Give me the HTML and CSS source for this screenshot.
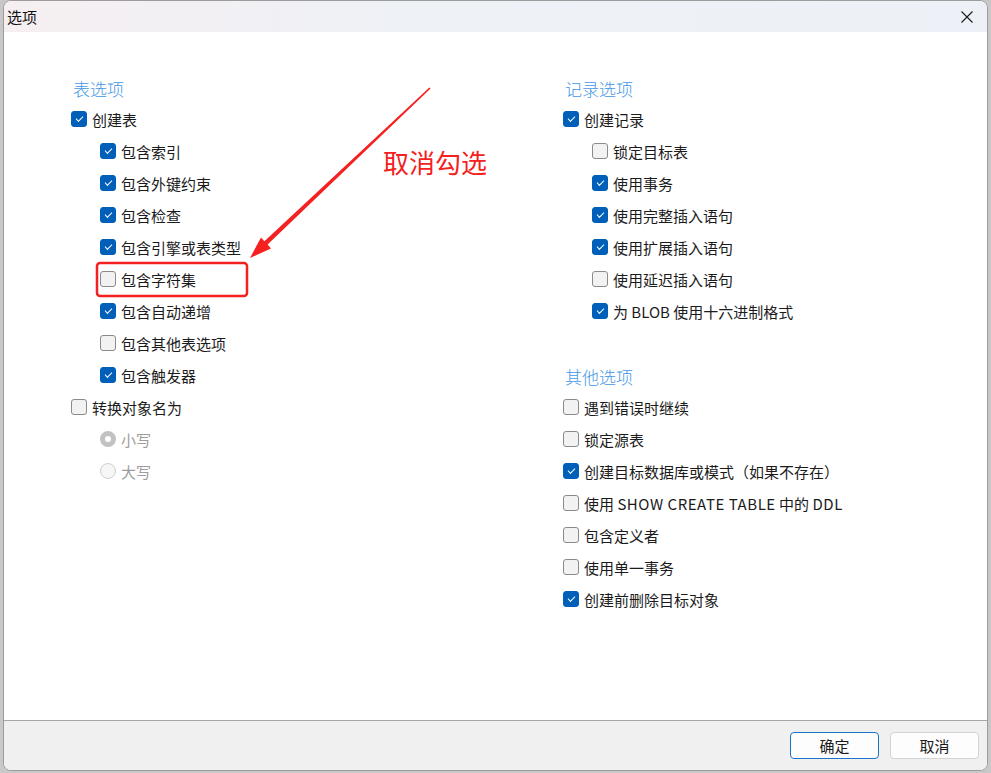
FILE: index.html
```html
<!DOCTYPE html>
<html lang="zh-CN">
<head>
    <meta charset="UTF-8">
    <title>选项</title>
    <link rel="stylesheet" href="styles.css">
</head>
<body>

<div class="window">
    <div class="titlebar">
        <span class="title">选项</span>
        <span class="close">
            <svg width="12" height="12" viewBox="0 0 12 12"><path d="M0.5 0.5 L11.5 11.5 M11.5 0.5 L0.5 11.5" stroke="#1a1a1a" stroke-width="1.1" fill="none"/></svg>
        </span>
    </div>

    <div class="content">
        <div class="column">
            <div class="heading">表选项</div>
            <div class="opt"><span class="box on"></span>创建表</div>
            <div class="opt sub"><span class="box on"></span>包含索引</div>
            <div class="opt sub"><span class="box on"></span>包含外键约束</div>
            <div class="opt sub"><span class="box on"></span>包含检查</div>
            <div class="opt sub"><span class="box on"></span>包含引擎或表类型</div>
            <div class="opt sub"><span class="box"></span>包含字符集</div>
            <div class="opt sub"><span class="box on"></span>包含自动递增</div>
            <div class="opt sub"><span class="box"></span>包含其他表选项</div>
            <div class="opt sub"><span class="box on"></span>包含触发器</div>
            <div class="opt"><span class="box"></span>转换对象名为</div>
            <div class="opt sub disabled"><span class="radio on"></span>小写</div>
            <div class="opt sub disabled"><span class="radio"></span>大写</div>
        </div>

        <div class="column">
            <div class="heading">记录选项</div>
            <div class="opt"><span class="box on"></span>创建记录</div>
            <div class="opt sub"><span class="box"></span>锁定目标表</div>
            <div class="opt sub"><span class="box on"></span>使用事务</div>
            <div class="opt sub"><span class="box on"></span>使用完整插入语句</div>
            <div class="opt sub"><span class="box on"></span>使用扩展插入语句</div>
            <div class="opt sub"><span class="box"></span>使用延迟插入语句</div>
            <div class="opt sub"><span class="box on"></span>为 BLOB 使用十六进制格式</div>

            <div class="heading second">其他选项</div>
            <div class="opt"><span class="box"></span>遇到错误时继续</div>
            <div class="opt"><span class="box"></span>锁定源表</div>
            <div class="opt"><span class="box on"></span>创建目标数据库或模式（如果不存在）</div>
            <div class="opt"><span class="box"></span><span>使用 <span class="latin">SHOW CREATE TABLE</span> 中的 <span class="latin">DDL</span></span></div>
            <div class="opt"><span class="box"></span>包含定义者</div>
            <div class="opt"><span class="box"></span>使用单一事务</div>
            <div class="opt"><span class="box on"></span>创建前删除目标对象</div>
        </div>
    </div>

    <div class="footer">
        <button class="btn primary">确定</button>
        <button class="btn">取消</button>
    </div>
</div>

<!-- red annotation drawn over the dialog -->
<svg class="marks" width="991" height="773" viewBox="0 0 991 773">
    <rect x="97" y="263" width="150" height="33" rx="3" fill="none" stroke="#f52020" stroke-width="2.5"/>
    <polygon fill="#f52020" points="250,258 271,248.5 267.6,244.6 430.6,88.6 429.4,87.4 264.4,241.2 261,237.6"/>
</svg>
<div class="note">取消勾选</div>

</body>
</html>
```

FILE: styles.css
```css
* {
    margin: 0;
    padding: 0;
    box-sizing: border-box;
}

body {
    width: 991px;
    height: 773px;
    overflow: hidden;
    background: #c8c8c8;
    font-family: "Noto Sans CJK SC", "Noto Sans", sans-serif;
    font-size: 15px;
    color: #1b1b1b;
    position: relative;
}

.window {
    margin-left: 3px;
    width: 985px;
    height: 771px;
    border: 1px solid #9c9c9c;
    border-radius: 8px;
    background: #ffffff;
    overflow: hidden;
    display: flex;
    flex-direction: column;
}

.titlebar {
    height: 31px;
    flex: none;
    display: flex;
    align-items: center;
    justify-content: space-between;
    padding-left: 3px;
    background: linear-gradient(90deg, #f6eff1, #eef1f6 40%, #edf1f7);
}

.title {
    font-size: 15px;
    color: #111;
}

.close {
    width: 40px;
    height: 31px;
    display: flex;
    align-items: center;
    justify-content: center;
}

/* option columns */
.content {
    height: 688px;
    flex: none;
    display: grid;
    grid-template-columns: 492px 1fr;
    padding: 42px 0 0 67px;
}

.heading {
    height: 29px;
    display: flex;
    align-items: center;
    padding-left: 2px;
    font-size: 17px;
    font-weight: 300;
    color: #4497e6;
}

.heading.second {
    margin-top: 35px;
}

.opt {
    height: 32px;
    display: flex;
    align-items: center;
    gap: 4px;
    white-space: nowrap;
}

.opt.sub {
    padding-left: 29px;
}

.opt.disabled {
    color: #9d9d9d;
}

.latin {
    letter-spacing: 0.55px;
}

.box {
    width: 16px;
    height: 16px;
    flex: none;
    margin-right: 1px;
    border: 1px solid #8a8a8a;
    border-radius: 3px;
    background: #f2f2f2;
    position: relative;
}

.box.on {
    border-color: #005fb8;
    background: #005fb8;
}

.box.on::after {
    content: '';
    position: absolute;
    left: 4px;
    top: 4px;
    width: 6px;
    height: 3px;
    border-left: 1.2px solid #fff;
    border-bottom: 1.2px solid #fff;
    transform: rotate(-45deg);
}

.radio {
    width: 16px;
    height: 16px;
    flex: none;
    margin-right: 1px;
    border-radius: 50%;
    border: 1px solid #cfcfcf;
    background: #f6f6f6;
}

.radio.on {
    border: 5px solid #c2c2c2;
    background: #ffffff;
}

/* dialog buttons */
.footer {
    flex: 1;
    border-top: 1px solid #a6a6a6;
    background: #f0f0f0;
    display: flex;
    justify-content: flex-end;
    gap: 11px;
    padding: 11px 8px 0 0;
}

.btn {
    width: 89px;
    height: 27px;
    border: 1px solid #d3d3d3;
    border-radius: 4px;
    background: #fdfdfd;
    font: 15px "Noto Sans CJK SC", sans-serif;
    color: #1b1b1b;
}

.btn.primary {
    border-color: #1a73c9;
}

/* annotation overlay */
.marks {
    position: absolute;
    left: 0;
    top: 0;
    pointer-events: none;
}

.note {
    position: absolute;
    left: 383px;
    top: 145px;
    font-size: 26px;
    line-height: 34px;
    color: #f52020;
}
```
